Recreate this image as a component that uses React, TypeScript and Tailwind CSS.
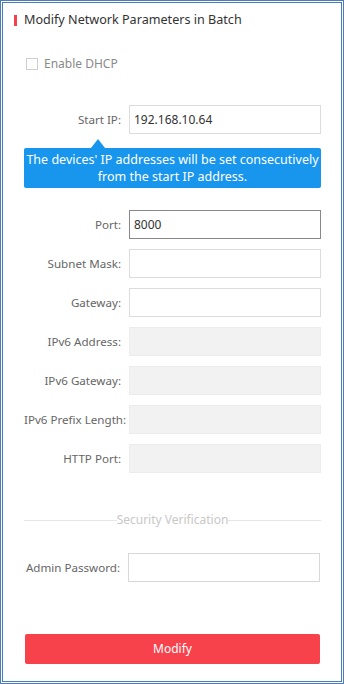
import React from "react";

const font = { fontFamily: '"Noto Sans", "Open Sans", sans-serif' };

function Row({ label, value, disabled, focused, top }: { label: string; value?: string; disabled?: boolean; focused?: boolean; top: string }) {
  return (
    <div className={`flex items-center ${top}`}>
      <div className="w-[97px] text-right text-[11.6px] text-[#666] leading-none whitespace-nowrap">{label}</div>
      <div
        className={`ml-[8px] h-[29px] w-[192px] flex items-center pl-[4px] text-[12px] text-[#333] border ${
          disabled ? "bg-[#f2f2f2] border-[#ececec]" : focused ? "bg-white border-[#888]" : "bg-white border-[#dcdcdc]"
        }`}
      >
        {value}
      </div>
    </div>
  );
}

export default function App() {
  return (
    <div
      style={font}
      className="w-[344px] h-[684px] box-border border-[3px] border-double border-[#4a7ebb] bg-white flex flex-col"
    >
      <div className="flex items-center h-[22px] mt-[6px] ml-[11px]">
        <div className="w-[3px] h-[11px] bg-[#f5414b]" />
        <div className="ml-[7px] text-[12.6px] text-[#333]">Modify Network Parameters in Batch</div>
      </div>

      <div className="flex items-center h-[20px] mt-[23px] ml-[23px]">
        <div className="w-[12px] h-[12px] border border-[#d0d0d0] bg-white" />
        <div className="ml-[6px] text-[12px] text-[#8a8a8a]">Enable DHCP</div>
      </div>

      <div className="ml-[21px] flex flex-col">
        <Row label="Start IP:" value="192.168.10.64" top="mt-[31px]" />
        <div className="relative mt-[14px] w-[297px] h-[40px] bg-[#1896ee] rounded-[2px] flex flex-col items-center justify-center text-white text-[12.5px] leading-[17px]">
          <div className="absolute -top-[9px] left-[67px] w-0 h-0 border-l-[7px] border-r-[7px] border-b-[9px] border-l-transparent border-r-transparent border-b-[#1896ee]" />
          <div>The devices' IP addresses will be set consecutively</div>
          <div>from the start IP address.</div>
        </div>
        <Row label="Port:" value="8000" focused top="mt-[22px]" />
        <Row label="Subnet Mask:" top="mt-[10px]" />
        <Row label="Gateway:" top="mt-[10px]" />
        <Row label="IPv6 Address:" disabled top="mt-[10px]" />
        <Row label="IPv6 Gateway:" disabled top="mt-[10px]" />
        <Row label="IPv6 Prefix Length:" disabled top="mt-[10px]" />
        <Row label="HTTP Port:" disabled top="mt-[10px]" />

        <div className="mt-[41px] w-[297px] flex items-center">
          <div className="flex-1 h-px bg-[#e6e6e6]" />
          <div className="text-[12px] text-[#c8c8c8] leading-none">Security Verification</div>
          <div className="flex-1 h-px bg-[#e6e6e6]" />
        </div>

        <div className="flex items-center mt-[27px]">
          <div className="w-[96px] text-right text-[11.6px] text-[#666] whitespace-nowrap">Admin Password:</div>
          <div className="ml-[8px] h-[29px] w-[192px] border border-[#d8d8d8] bg-white" />
        </div>

        <div className="mt-[52px] ml-[1px] w-[295px] h-[30px] bg-[#f7414b] rounded-[2px] flex items-center justify-center text-white text-[12px]">
          Modify
        </div>
      </div>
    </div>
  );
}
